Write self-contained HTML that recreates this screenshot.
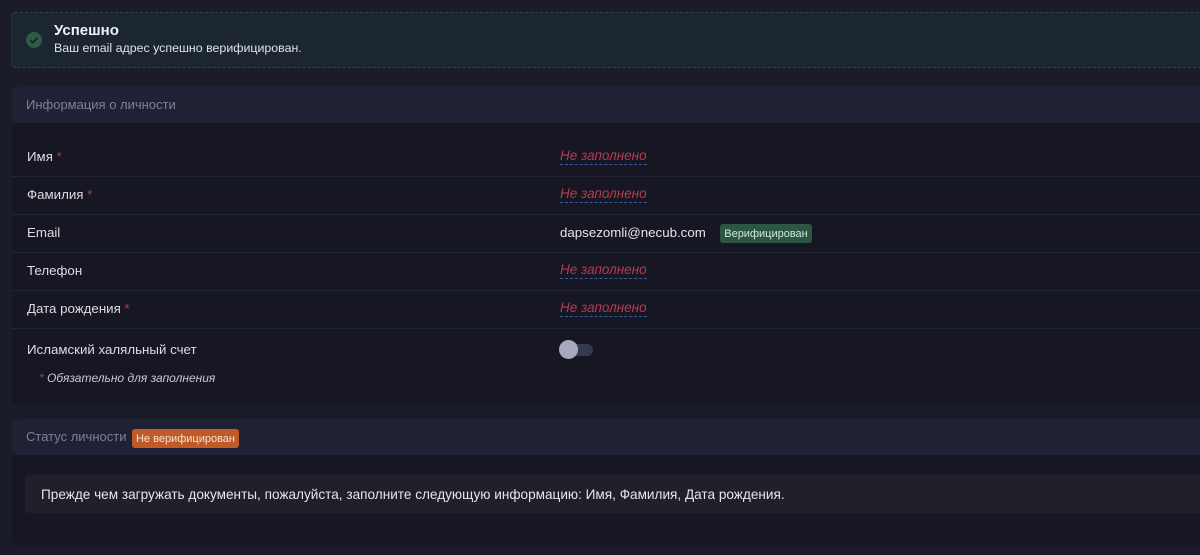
<!DOCTYPE html><html><head><meta charset="utf-8"><style>
body{margin:0;width:1200px;height:555px;overflow:hidden;background:#1b1c29;font-family:"Liberation Sans","DejaVu Sans",sans-serif;color:#e6e6ee;position:relative}
.a{position:absolute}
.alert{left:11px;top:12px;width:1200px;height:54px;background:#1b2630;border-top:1px dashed #34404a;border-bottom:1px dashed #34404a;border-left:1px dashed #2c3640;border-radius:4px}
.card{left:12px;width:1200px;background:#161722;border-radius:6px}
.hd{position:absolute;left:0;right:0;top:0;height:36px;background:#1f2234;border-radius:6px 6px 0 0;color:#7d8196;font-size:13px;line-height:36px;padding-left:14px}
.row{position:absolute;left:27px;width:1180px;font-size:13.3px;color:#dcdce4}
.line{position:absolute;left:12px;width:1200px;height:1px;background:#232534}
.nf{position:absolute;left:560px;color:#b73a52;font-style:italic;font-size:13.5px;border-bottom:1px dashed #3b5a9a;line-height:16px}
.st{color:#b73a52}
</style></head><body>
<div class="a alert"></div>
<svg class="a" style="left:26px;top:32px" width="16" height="16"><circle cx="8" cy="8" r="8" fill="#2f5a46"/><path d="M4.5 8.2l2.4 2.4 4.6-4.6" stroke="#162a22" stroke-width="2" fill="none"/></svg>
<div class="a" style="left:54px;top:22px;font-size:15px;font-weight:bold;color:#f0f0f4">Успешно</div>
<div class="a" style="left:54px;top:41px;font-size:12.4px;color:#e0e0e8">Ваш email адрес успешно верифицирован.</div>

<div class="a card" style="top:87px;height:318px"><div class="hd">Информация о личности</div></div>
<div class="row a" style="top:149px">Имя <span class="st">*</span></div>
<div class="nf" style="top:148px">Не заполнено</div>
<div class="line" style="top:176px"></div>
<div class="row a" style="top:187px">Фамилия <span class="st">*</span></div>
<div class="nf" style="top:186px">Не заполнено</div>
<div class="line" style="top:214px"></div>
<div class="row a" style="top:225px">Email</div>
<div class="a" style="left:560px;top:225px;font-size:13.3px;color:#e6e6ee">dapsezomli@necub.com</div>
<div class="a" style="left:720px;top:224px;height:19px;width:92px;background:#2c5542;border-radius:3px;color:#cfe6da;font-size:11px;line-height:20px;text-align:center">Верифицирован</div>
<div class="line" style="top:252px"></div>
<div class="row a" style="top:263px">Телефон</div>
<div class="nf" style="top:262px">Не заполнено</div>
<div class="line" style="top:290px"></div>
<div class="row a" style="top:301px">Дата рождения <span class="st">*</span></div>
<div class="nf" style="top:300px">Не заполнено</div>
<div class="line" style="top:328px"></div>
<div class="row a" style="top:342px">Исламский халяльный счет</div>
<div class="a" style="left:560px;top:344px;width:33px;height:12px;border-radius:6px;background:#353a4f"></div>
<div class="a" style="left:559px;top:340px;width:19px;height:19px;border-radius:50%;background:#a7aabd"></div>
<div class="a" style="left:39px;top:371px;font-size:12px;font-style:italic;color:#c8c8d2"><span class="st">*</span> Обязательно для заполнения</div>

<div class="a card" style="top:419px;height:126px"><div class="hd">Статус личности</div></div>
<div class="a" style="left:132px;top:429px;width:107px;height:19px;background:#c05a26;border-radius:3px;color:#f5e2d6;font-size:11px;line-height:20px;text-align:center">Не верифицирован</div>
<div class="a" style="left:25px;top:475px;width:1200px;height:38px;background:#211f2a;border-radius:4px"></div>
<div class="a" style="left:41px;top:487px;font-size:13.6px;color:#e6e6ee">Прежде чем загружать документы, пожалуйста, заполните следующую информацию: Имя, Фамилия, Дата рождения.</div>
</body></html>
